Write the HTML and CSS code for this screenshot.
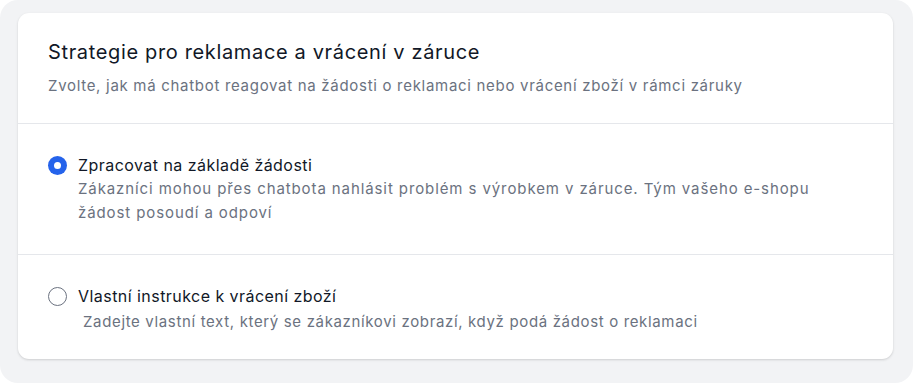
FILE: index.html
```html
<!DOCTYPE html>
<html lang="cs">
<head>
<meta charset="utf-8">
<title>Strategie pro reklamace</title>
<link rel="stylesheet" href="styles.css">
</head>
<body>
<div class="frame">
  <section class="card">
    <header class="card-header">
      <h2 class="card-title">Strategie pro reklamace a vrácení v záruce</h2>
      <p class="card-subtitle">Zvolte, jak má chatbot reagovat na žádosti o reklamaci nebo vrácení zboží v rámci záruky</p>
    </header>
    <label class="option">
      <span class="radio radio-checked"></span>
      <span class="option-body">
        <span class="option-title">Zpracovat na základě žádosti</span>
        <span class="option-desc option-desc-wide">Zákazníci mohou přes chatbota nahlásit problém s výrobkem v záruce. Tým vašeho e-shopu<br>žádost posoudí a odpoví</span>
      </span>
    </label>
    <label class="option">
      <span class="radio"></span>
      <span class="option-body">
        <span class="option-title">Vlastní instrukce k vrácení zboží</span>
        <span class="option-desc option-desc-indent">Zadejte vlastní text, který se zákazníkovi zobrazí, když podá žádost o reklamaci</span>
      </span>
    </label>
  </section>
</div>
</body>
</html>
```

FILE: styles.css
```css
* { box-sizing: border-box; }
html, body { margin: 0; padding: 0; background: #ffffff; }
body {
  font-family: Inter, "Noto Sans", sans-serif;
  width: 913px;
  height: 383px;
}
.frame {
  background: #f2f3f5;
  border-radius: 18px;
  width: 913px;
  height: 383px;
  padding: 13px 20px 24px 18px;
}
.card {
  background: #ffffff;
  border-radius: 11px;
  box-shadow: 0 1px 3px rgba(0,0,0,0.10), 0 1px 2px rgba(0,0,0,0.06);
  height: 346px;
  overflow: hidden;
}
.card-header {
  padding: 25px 30px 25px 30px;
  border-bottom: 1px solid #e5e7eb;
}
.card-title {
  margin: 0;
  font-size: 20px;
  line-height: 28px;
  font-weight: 400;
  letter-spacing: 0.65px;
  color: #111827;
}
.card-subtitle {
  margin: 8px 0 0;
  font-size: 15px;
  line-height: 24px;
  letter-spacing: 0.7px;
  color: #6b7280;
}
.option {
  display: flex;
  gap: 11px;
  padding: 29px 30px 29px 30px;
  cursor: pointer;
}
.option + .option { border-top: 1px solid #e5e7eb; padding-bottom: 25px; }
.radio {
  flex: none;
  width: 19px;
  height: 19px;
  margin-top: 3px;
  border-radius: 50%;
  border: 1.5px solid #6b7280;
  background: #fff;
  display: flex;
  align-items: center;
  justify-content: center;
}
.radio-checked {
  border: none;
  background: #2563eb;
}
.radio-checked::after {
  content: "";
  width: 7px;
  height: 7px;
  border-radius: 50%;
  background: #fff;
}
.option-body { display: flex; flex-direction: column; }
.option-title {
  font-size: 16px;
  line-height: 24px;
  letter-spacing: 0.45px;
  color: #111827;
}
.option-desc {
  font-size: 15px;
  line-height: 24px;
  letter-spacing: 0.65px;
  color: #6b7280;
}
.option-desc-wide { letter-spacing: 0.9px; }
.option-desc-indent { padding-left: 5px; margin-top: 2px; }
```
